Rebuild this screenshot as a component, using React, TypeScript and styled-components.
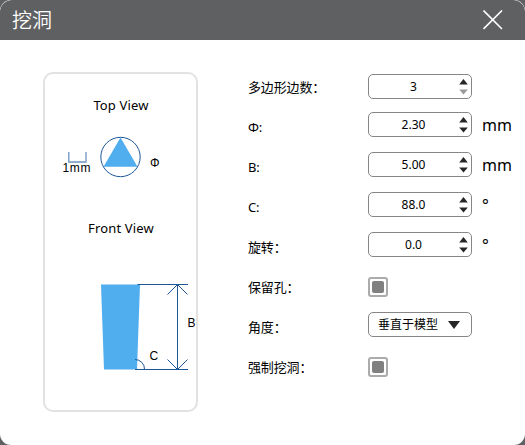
import React from "react";
import styled, { createGlobalStyle } from "styled-components";

const GlobalStyle = createGlobalStyle`
  *, *::before, *::after { box-sizing: border-box; }
  body {
    margin: 0;
    background: #5f6062;
    font-family: "Noto Sans", "Noto Sans CJK SC", sans-serif;
    color: #000;
  }
`;

const Dialog = styled.div`
  width: 525px;
  height: 445px;
  display: flex;
  flex-direction: column;
  overflow: hidden;
  background: #fff;
  border-radius: 11px;
`;

const TitleBar = styled.header`
  height: 40px;
  flex: none;
  display: flex;
  align-items: center;
  justify-content: space-between;
  padding: 0 22px 0 12px;
  background: #5f6062;
  border-radius: 12px 12px 0 0;
  color: #fff;
`;

const Title = styled.h1`
  margin: 0;
  font: 350 20px/40px "Noto Sans CJK SC", sans-serif;
`;

const CloseButton = styled.button`
  display: flex;
  padding: 0;
  border: 0;
  background: none;
  color: #fff;
`;

const Content = styled.main`
  display: flex;
  align-items: flex-start;
  padding-left: 43px;
`;

const Preview = styled.section`
  width: 155px;
  height: 340px;
  margin-top: 32px;
  display: flex;
  flex-direction: column;
  border: 2px solid #e2e2e2;
  border-radius: 10px;
`;

const ViewTitle = styled.h2`
  margin: 0 0 0 1px;
  font-size: 13px;
  font-weight: 400;
  line-height: 20px;
  letter-spacing: 0.15px;
  text-align: center;

  &:first-child {
    margin-top: 21px;
  }
`;

const Drawing = styled.svg`
  display: block;
  flex: none;
  font-family: "Liberation Sans", sans-serif;
`;

const Form = styled.form`
  margin: 28px 0 0 50px;
`;

const Row = styled.div`
  height: 40px;
  display: grid;
  grid-template-columns: 120px 104px 1fr;
  align-items: start;
`;

const Label = styled.label`
  font-size: 13px;
  line-height: 38px;
  letter-spacing: -0.15px;
  white-space: nowrap;
`;

const Field = styled.div<{ $top: number }>`
  height: 25px;
  margin-top: ${(p) => p.$top}px;
  display: flex;
  align-items: center;
  border: 1px solid #868686;
  border-radius: 5px;
`;

const Value = styled.span`
  flex: 1;
  padding-right: 1px;
  font-size: 12px;
  line-height: 23px;
  text-align: center;
`;

const Stepper = styled.svg`
  flex: none;
  margin-right: 3px;
`;

const Choice = styled.span`
  padding-left: 9px;
  font-size: 12px;
  line-height: 23px;
`;

const Caret = styled.svg`
  margin-left: 10px;
`;

const Unit = styled.span`
  padding-left: 10px;
  font-size: 16px;
  line-height: 34px;
`;

const Check = styled.span`
  width: 20px;
  height: 20px;
  margin-top: 9px;
  display: grid;
  place-items: center;
  border: 2px solid #ababab;
  border-radius: 3px;

  &::after {
    content: "";
    width: 12px;
    height: 12px;
    border-radius: 2px;
    background: #808080;
  }
`;

type NumberRowProps = {
  label: string;
  value: string;
  unit?: string;
  top?: number;
  atMinimum?: boolean;
};

function NumberRow({ label, value, unit, top = 4, atMinimum }: NumberRowProps) {
  return (
    <Row>
      <Label>{label}</Label>
      <Field $top={top}>
        <Value>{value}</Value>
        <Stepper width="9" height="23" viewBox="0 0 9 23">
          <path d="M0.2 9.5 L4.5 4 L8.8 9.5Z" fill="#262626" />
          <path d="M0.2 14.5 L4.5 19.5 L8.8 14.5Z" fill={atMinimum ? "#999" : "#262626"} />
        </Stepper>
      </Field>
      {unit && <Unit>{unit}</Unit>}
    </Row>
  );
}

function CheckRow({ label }: { label: string }) {
  return (
    <Row>
      <Label>{label}</Label>
      <Check />
    </Row>
  );
}

export default function App() {
  return (
    <>
      <GlobalStyle />
      <Dialog>
        <TitleBar>
          <Title>挖洞</Title>
          <CloseButton aria-label="关闭">
            <svg width="20" height="20" viewBox="0 0 20 20" fill="none" stroke="currentColor" strokeWidth="1.6">
              <path d="M0.5 0.5 L19 19 M19 0.5 L0.5 19" />
            </svg>
          </CloseButton>
        </TitleBar>
        <Content>
          <Preview>
            <ViewTitle>Top View</ViewTitle>
            <Drawing width="151" height="103" viewBox="45 115 151 103">
              <path d="M68.8 152 V162 H86 V152" fill="none" stroke="#6d94c2" strokeWidth="1.3" />
              <text x="62.5" y="172" fontSize="12" textLength="28">1mm</text>
              <path d="M120.5 137.5 L137.5 166.8 H103.5Z" fill="#50adee" />
              <circle cx="120.5" cy="157" r="19.7" fill="none" stroke="#1d5797" />
              <text x="150" y="167" fontSize="12">Φ</text>
            </Drawing>
            <ViewTitle>Front View</ViewTitle>
            <Drawing width="151" height="172" viewBox="45 238 151 172">
              <path d="M101 284.5 H140 L137 369.5 H104Z" fill="#50adee" />
              <g fill="none" stroke="#1d5797">
                <path d="M137.5 284.5 H188 M135 369.5 H188 M177.5 284.5 V369.5" />
                <path d="M167.5 294.5 L177.5 284.5 L187.5 294.5 M167.5 359.5 L177.5 369.5 L187.5 359.5" />
                <path d="M135 359.5 A9.5 9.5 0 0 1 144.5 369.5" />
              </g>
              <text x="149.5" y="360" fontSize="12">C</text>
              <text x="187.5" y="327" fontSize="12" textLength="8" lengthAdjust="spacingAndGlyphs">B</text>
            </Drawing>
          </Preview>
          <Form>
            <NumberRow label="多边形边数：" value="3" top={6} atMinimum />
            <NumberRow label="Φ:" value="2.30" unit="mm" />
            <NumberRow label="B:" value="5.00" unit="mm" />
            <NumberRow label="C:" value="88.0" unit="°" />
            <NumberRow label="旋转：" value="0.0" unit="°" />
            <CheckRow label="保留孔：" />
            <Row>
              <Label>角度：</Label>
              <Field $top={4}>
                <Choice>垂直于模型</Choice>
                <Caret width="12" height="8" viewBox="0 0 12 8">
                  <path d="M0 0 H12 L6 8Z" fill="#262626" />
                </Caret>
              </Field>
            </Row>
            <CheckRow label="强制挖洞：" />
          </Form>
        </Content>
      </Dialog>
    </>
  );
}
